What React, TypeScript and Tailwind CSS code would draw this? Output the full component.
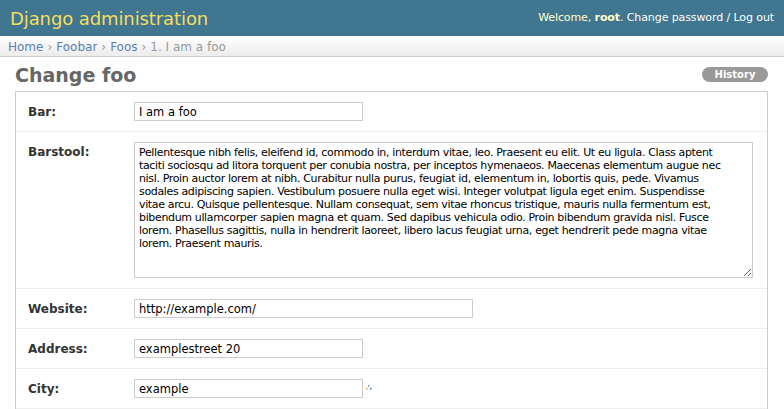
import React from 'react'

const lorem = [
  'Pellentesque nibh felis, eleifend id, commodo in, interdum vitae, leo. Praesent eu elit. Ut eu ligula. Class aptent',
  'taciti sociosqu ad litora torquent per conubia nostra, per inceptos hymenaeos. Maecenas elementum augue nec',
  'nisl. Proin auctor lorem at nibh. Curabitur nulla purus, feugiat id, elementum in, lobortis quis, pede. Vivamus',
  'sodales adipiscing sapien. Vestibulum posuere nulla eget wisi. Integer volutpat ligula eget enim. Suspendisse',
  'vitae arcu. Quisque pellentesque. Nullam consequat, sem vitae rhoncus tristique, mauris nulla fermentum est,',
  'bibendum ullamcorper sapien magna et quam. Sed dapibus vehicula odio. Proin bibendum gravida nisl. Fusce',
  'lorem. Phasellus sagittis, nulla in hendrerit laoreet, libero lacus feugiat urna, eget hendrerit pede magna vitae',
  'lorem. Praesent mauris.',
].join('\n')

const Row: React.FC<{ label: string; children: React.ReactNode }> = ({ label, children }) => (
  <div className="flex items-start border-b border-[#eee] py-[10px] pl-[12px]">
    <label className="w-[106px] shrink-0 pt-[1px] text-[12px] font-bold text-[#333]">{label}</label>
    {children}
  </div>
)

const inputCls =
  'h-[19px] border border-[#ccc] bg-white px-[4px] text-[11.5px] text-black outline-none'

export default function App() {
  return (
    <div className="min-h-screen bg-white" style={{ fontFamily: '"DejaVu Sans", "Liberation Sans", sans-serif' }}>
      <div className="flex h-[36px] items-center justify-between bg-[#417690] pl-[10px] pr-[10px] pt-[1px]">
        <h1 className="text-[18px] tracking-[-0.1px] text-[#f5dd5d]">Django administration</h1>
        <div className="text-[11px] tracking-[-0.1px] text-white">
          <span className="text-[#ffc]">
            Welcome, <strong>root</strong>.
          </span>{' '}
          <a>Change password</a> / <a>Log out</a>
        </div>
      </div>

      <div className="flex h-[21px] items-center border-b border-[#ccc] bg-gradient-to-b from-white to-[#ececec] px-[8px] pt-[1px] text-[12px] text-[#999]">
        <a className="text-[#5b80b2]">Home</a>
        <span className="px-[4px]">›</span>
        <a className="text-[#5b80b2]">Foobar</a>
        <span className="px-[4px]">›</span>
        <a className="text-[#5b80b2]">Foos</a>
        <span className="px-[4px]">›</span>
        <span>1. I am a foo</span>
      </div>

      <div className="pl-[15px] pr-[16px]">
        <div className="flex h-[34px] items-center justify-between">
          <h2 className="pt-[2px] text-[19px] font-bold text-[#666]">Change foo</h2>
          <a className="flex h-[15px] w-[66px] items-center justify-center rounded-full bg-[#999] text-[10px] font-bold text-white">
            History
          </a>
        </div>

        <div className="border border-b-0 border-[#ccc]">
          <Row label="Bar:">
            <input className={`${inputCls} w-[229px]`} defaultValue="I am a foo" />
          </Row>
          <Row label="Barstool:">
            <textarea
              wrap="off"
              className="h-[136px] w-[619px] resize overflow-hidden border border-[#ccc] px-[4px] py-[3px] text-[11px] leading-[13px] tracking-[-0.35px] text-black outline-none"
              defaultValue={lorem}
            />
          </Row>
          <Row label="Website:">
            <input className={`${inputCls} w-[339px]`} defaultValue="http://example.com/" />
          </Row>
          <Row label="Address:">
            <input className={`${inputCls} w-[229px]`} defaultValue="examplestreet 20" />
          </Row>
          <Row label="City:">
            <input className={`${inputCls} w-[229px]`} defaultValue="example" />
            <svg className="ml-[3px] mt-[6px]" width="6" height="5" viewBox="0 0 6 5">
              <rect x="2" y="0" width="1.5" height="1.5" fill="#6b8fd6" />
              <rect x="0" y="3" width="1.5" height="1.5" fill="#e0a040" />
              <rect x="4" y="3" width="1.5" height="1.5" fill="#4a6fc0" />
            </svg>
          </Row>
        </div>
      </div>
    </div>
  )
}
